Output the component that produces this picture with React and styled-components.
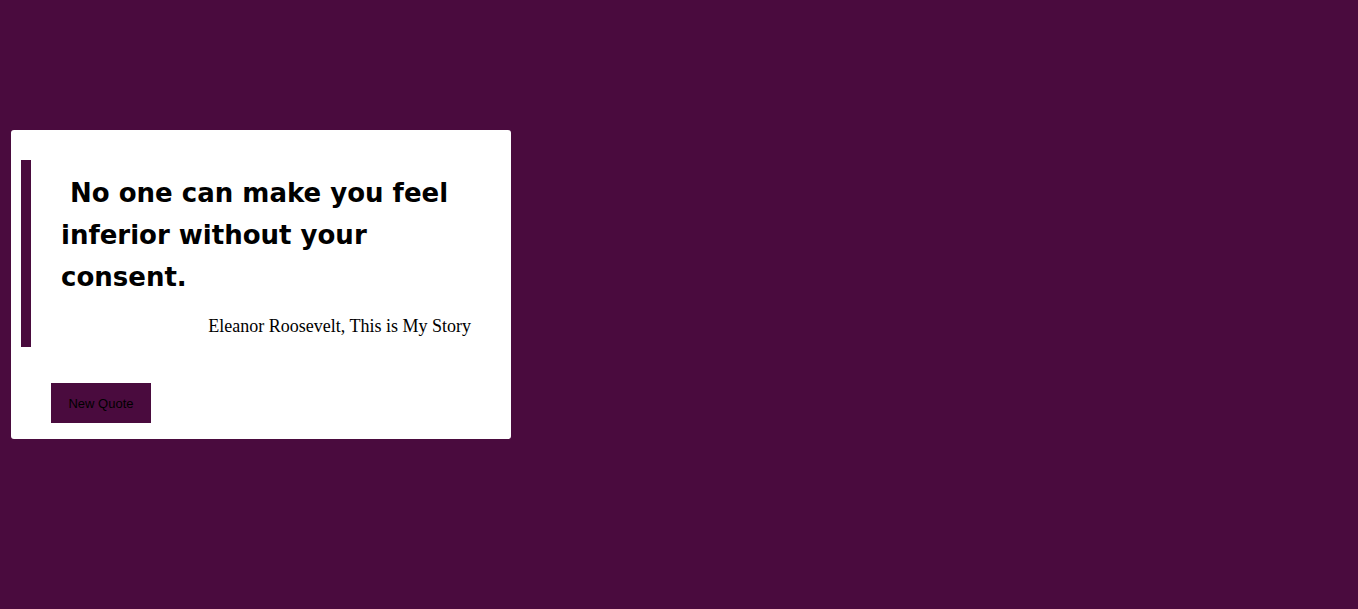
import React from "react";
import styled, { createGlobalStyle } from "styled-components";

const GlobalStyle = createGlobalStyle`
  body {
    margin: 0;
    background-color: #4a0b3e;
    font-family: "Liberation Serif", serif;
  }
`;

const Page = styled.div`
  min-height: 609px;
  padding: 130px 0 0 11px;
  box-sizing: border-box;
`;

const Card = styled.div`
  width: 500px;
  box-sizing: border-box;
  background-color: #fff;
  border-radius: 3px;
  padding: 30px 40px 16px 10px;
`;

const Quote = styled.blockquote`
  margin: 0;
  border-left: 10px solid #4a0b3e;
  padding: 12px 0 10px 30px;
`;

const QuoteText = styled.p`
  margin: 0;
  font-family: "Comic Sans MS", "DejaVu Sans", sans-serif;
  font-weight: bold;
  font-size: 26px;
  line-height: 42px;
  color: #000;
  white-space: pre-wrap;
`;

const Author = styled.p`
  margin: 18px 0 0;
  text-align: right;
  font-size: 18px;
  color: #000;
`;

const Button = styled.button`
  margin: 36px 0 0 30px;
  width: 100px;
  height: 40px;
  border: none;
  background-color: #4a0b3e;
  color: #000;
  font-family: "Liberation Sans", Arial, sans-serif;
  font-size: 13px;
  cursor: pointer;
`;

export default function App() {
  return (
    <Page>
      <GlobalStyle />
      <Card>
        <Quote>
          <QuoteText>{" No one can make you feel inferior without your consent."}</QuoteText>
          <Author>Eleanor Roosevelt, This is My Story</Author>
        </Quote>
        <Button>New Quote</Button>
      </Card>
    </Page>
  );
}
